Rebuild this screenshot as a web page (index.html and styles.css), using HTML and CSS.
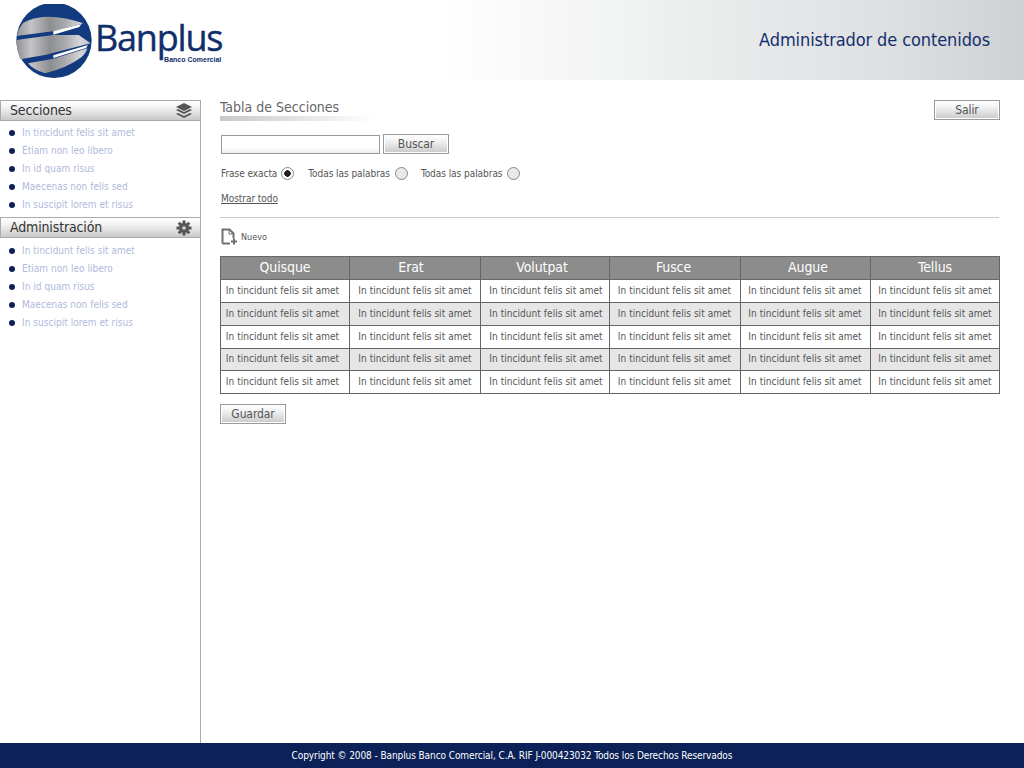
FILE: index.html
```html
<!DOCTYPE html>
<html lang="es">
<head>
<meta charset="utf-8">
<title>Banplus - Administrador de contenidos</title>
<link rel="stylesheet" href="styles.css">
</head>
<body>
<header class="top">
  <div class="logo">
    <svg class="globe" width="80" height="76" viewBox="45 12 240 228">
      <defs>
        <linearGradient id="band" gradientUnits="userSpaceOnUse" x1="48" y1="0" x2="275" y2="0">
          <stop offset="0" stop-color="#8f9093"/>
          <stop offset=".2" stop-color="#c4c4c6"/>
          <stop offset=".45" stop-color="#8d8e91"/>
          <stop offset=".65" stop-color="#a9aaad"/>
          <stop offset=".85" stop-color="#d6d6d8"/>
          <stop offset="1" stop-color="#bcbdc0"/>
        </linearGradient>
      </defs>
      <circle cx="162" cy="121" r="113" fill="#123a7e"/>
      <path d="M70 68Q140 32 250 70L170 92 50 108Q55 85 70 68Z" fill="url(#band)"/>
      <path d="M160 94L244 72 238 81 160 104Z" fill="#fff"/>
      <path d="M48 120L160 105 236 105 272 130 135 165 60 178Q50 150 48 120Z" fill="url(#band)"/>
      <path d="M160 166L264 135 258 144 160 174Z" fill="#fff"/>
      <path d="M84 190L160 176 262 145Q258 160 244 172 200 205 135 220 100 210 84 190Z" fill="url(#band)"/>
    </svg>
    <div class="brand">
      <span class="brand-name">Banplus</span>
      <span class="brand-sub">Banco Comercial</span>
    </div>
  </div>
  <h1 class="app-title">Administrador de contenidos</h1>
</header>

<div class="main">
  <aside class="side">
    <div class="side-head">
      <span>Secciones</span>
      <svg width="18" height="18" viewBox="0 0 18 18"><path d="M9 1l8 4-8 4-8-4z" fill="#555"/><path d="M1 8l2-1 6 3 6-3 2 1-8 4z" fill="#555"/><path d="M1 12l2-1 6 3 6-3 2 1-8 4z" fill="#555"/></svg>
    </div>
    <ul class="side-list">
      <li>In tincidunt felis sit amet</li>
      <li>Etiam non leo libero</li>
      <li>In id quam risus</li>
      <li>Maecenas non felis sed</li>
      <li>In suscipit lorem et risus</li>
    </ul>
    <div class="side-head">
      <span>Administración</span>
      <svg width="18" height="18" viewBox="0 0 18 18"><g fill="#555"><circle cx="9" cy="9" r="5"/><rect x="7.500" y="1.500" width="3" height="15"/><rect x="7.500" y="1.500" width="3" height="15" transform="rotate(45 9 9)"/><rect x="7.500" y="1.500" width="3" height="15" transform="rotate(90 9 9)"/><rect x="7.500" y="1.500" width="3" height="15" transform="rotate(135 9 9)"/></g><circle cx="9" cy="9" r="1.800" fill="#d8d8d8"/></svg>
    </div>
    <ul class="side-list">
      <li>In tincidunt felis sit amet</li>
      <li>Etiam non leo libero</li>
      <li>In id quam risus</li>
      <li>Maecenas non felis sed</li>
      <li>In suscipit lorem et risus</li>
    </ul>
  </aside>

  <main class="content">
    <div class="title-row">
      <h2 class="page-title">Tabla de Secciones</h2>
      <button class="btn" type="button">Salir</button>
    </div>
    <div class="search">
      <input class="search-input" type="text" aria-label="Buscar">
      <button class="btn" type="button">Buscar</button>
    </div>
    <div class="radios">
      <span class="radio-item">Frase exacta <i class="radio on"></i></span>
      <span class="radio-item">Todas las palabras <i class="radio"></i></span>
      <span class="radio-item">Todas las palabras <i class="radio"></i></span>
    </div>
    <a class="show-all" href="#">Mostrar todo</a>
    <div class="rule"></div>
    <div class="new">
      <svg width="17" height="17" viewBox="0 0 17 17"><path d="M1.500 15.500V1.500h7l4 4v5M1.500 15.500h7.500" fill="none" stroke="#707070" stroke-width="2"/><path d="M8 1.500v4.500h4.500" fill="none" stroke="#707070" stroke-width="1"/><path d="M10 13.500h6M13 10.500v6" stroke="#707070" stroke-width="2"/></svg>
      <span>Nuevo</span>
    </div>
    <table class="grid">
      <thead>
        <tr><th>Quisque</th><th>Erat</th><th>Volutpat</th><th>Fusce</th><th>Augue</th><th>Tellus</th></tr>
      </thead>
      <tbody>
        <tr><td>In tincidunt felis sit amet</td><td>In tincidunt felis sit amet</td><td>In tincidunt felis sit amet</td><td>In tincidunt felis sit amet</td><td>In tincidunt felis sit amet</td><td>In tincidunt felis sit amet</td></tr>
        <tr><td>In tincidunt felis sit amet</td><td>In tincidunt felis sit amet</td><td>In tincidunt felis sit amet</td><td>In tincidunt felis sit amet</td><td>In tincidunt felis sit amet</td><td>In tincidunt felis sit amet</td></tr>
        <tr><td>In tincidunt felis sit amet</td><td>In tincidunt felis sit amet</td><td>In tincidunt felis sit amet</td><td>In tincidunt felis sit amet</td><td>In tincidunt felis sit amet</td><td>In tincidunt felis sit amet</td></tr>
        <tr><td>In tincidunt felis sit amet</td><td>In tincidunt felis sit amet</td><td>In tincidunt felis sit amet</td><td>In tincidunt felis sit amet</td><td>In tincidunt felis sit amet</td><td>In tincidunt felis sit amet</td></tr>
        <tr><td>In tincidunt felis sit amet</td><td>In tincidunt felis sit amet</td><td>In tincidunt felis sit amet</td><td>In tincidunt felis sit amet</td><td>In tincidunt felis sit amet</td><td>In tincidunt felis sit amet</td></tr>
      </tbody>
    </table>
    <button class="btn save" type="button">Guardar</button>
  </main>
</div>

<footer class="foot">Copyright © 2008 - Banplus Banco Comercial, C.A. RIF J-000423032 Todos los Derechos Reservados</footer>
</body>
</html>
```
FILE: styles.css
```css
* { box-sizing: border-box; }
html, body { height: 100%; }
body {
  margin: 0;
  display: flex;
  flex-direction: column;
  height: 768px;
  overflow: hidden;
  background: #fff;
  color: #555;
  font-family: "DejaVu Sans Condensed", "DejaVu Sans", sans-serif;
  font-size: 10px;
}

/* header */
.top {
  flex: 0 0 80px;
  display: flex;
  justify-content: space-between;
  background: linear-gradient(90deg, #fff 0, #fff 440px, #f3f4f4 600px, #e7e8e9 760px, #dfe0e2 880px, #cfd0d2 100%);
}
.logo { display: flex; padding: 4px 0 0 15px; }
.globe { display: block; }
.brand { display: flex; flex-direction: column; align-items: flex-end; }
.brand-name {
  margin-top: 13px;
  font-family: "Open Sans", sans-serif;
  font-size: 36px;
  line-height: 42px;
  letter-spacing: -1.2px;
  -webkit-text-stroke: .4px #0f2e6a;
  color: #0f2e6a;
}
.brand-sub {
  margin-top: -3px;
  padding-right: 1px;
  font-family: "Liberation Sans", sans-serif;
  font-size: 7px;
  font-weight: bold;
  line-height: 8px;
  color: #0f2e6a;
}
.app-title {
  margin: 29px 34px 0 0;
  font-size: 18px;
  font-weight: normal;
  line-height: 21px;
  letter-spacing: -.1px;
  color: #12306e;
}

/* layout */
.main { flex: 1; display: flex; padding-top: 20px; min-height: 0; }
.side {
  flex: 0 0 201px;
  border-right: 1px solid #aaa;
}
.side-head {
  display: flex;
  align-items: center;
  justify-content: space-between;
  height: 21px;
  padding: 0 7px 2px 9px;
  border: 1px solid #aaa;
  border-right: 0;
  background: linear-gradient(#fff, #f2f2f2 35%, #c9c9c9);
  font-size: 14px;
  letter-spacing: -.15px;
  color: #333;
}
.side-head svg { margin-top: 2px; }
.side-list { list-style: none; margin: 0; padding: 3px 0; }
.side-list:last-child { padding-top: 4px; }
.side-list li {
  position: relative;
  height: 18px;
  padding-left: 22px;
  line-height: 18px;
  color: #b0b9dc;
  font-size: 10px;
  letter-spacing: .03px;
}
.side-list li::before {
  content: "";
  position: absolute;
  left: 9px;
  top: 6px;
  width: 6px;
  height: 6px;
  border-radius: 50%;
  background: #0f2158;
}

/* content */
.content { flex: 1; padding: 0 24px 0 19px; min-width: 0; }
.title-row { display: flex; justify-content: space-between; height: 34px; }
.page-title {
  width: 156px;
  height: 21px;
  margin: 0;
  padding-bottom: 5px;
  background: linear-gradient(90deg, #c8c8c8, #fff) left bottom / 100% 5px no-repeat;
  font-size: 14px;
  font-weight: normal;
  line-height: 14px;
  color: #666;
}
.btn {
  display: block;
  width: 66px;
  height: 20px;
  padding: 0;
  border: 1px solid #999;
  outline: 1px solid #fff;
  outline-offset: -2px;
  background: linear-gradient(#fff, #f2f2f2 35%, #c9c9c9);
  font: 12px/18px "DejaVu Sans Condensed", "DejaVu Sans", sans-serif;
  letter-spacing: -.1px;
  color: #555;
}
.search { display: flex; align-items: flex-end; gap: 3px; padding-left: 1px; }
.search-input {
  width: 159px;
  height: 19px;
  border: 1px solid #999;
  background: linear-gradient(#fff 70%, #ececec);
}
.radios { display: flex; gap: 13px; margin-top: 12px; padding-left: 1px; height: 15px; align-items: center; }
.radio-item { display: flex; align-items: center; gap: 5px; font-size: 10px; letter-spacing: -.05px; color: #555; }
.radio-item:first-child { gap: 4px; margin-right: 1px; }
.radio {
  display: block;
  width: 13px;
  height: 13px;
  border: 1px solid #888;
  border-radius: 50%;
  background: #e8e8e8;
}
.radio.on { background: radial-gradient(circle, #222 0, #222 3px, #fff 3.5px); }
.show-all {
  display: inline-block;
  margin: 12px 0 0 1px;
  font-size: 10px;
  line-height: 12px;
  letter-spacing: -.05px;
  color: #555;
}
.rule { height: 1px; margin: 12px 1px 0 0; background: #ccc; }
.new { display: flex; align-items: center; gap: 3px; height: 17px; margin-top: 10px; padding-left: 1px; font-size: 9px; color: #555; }
.grid {
  width: 779px;
  margin-top: 11px;
  border-collapse: collapse;
  table-layout: fixed;
}
.grid th {
  height: 23px;
  padding: 0 0 2px;
  border: 1px solid #666;
  background: #8c8c8c;
  font-size: 14px;
  font-weight: normal;
  letter-spacing: -.1px;
  color: #fff;
}
.grid th:nth-child(1) { width: 129px; }
.grid th:nth-child(2) { width: 131px; padding-right: 8px; }
.grid th:nth-child(3) { width: 129px; padding-right: 6px; }
.grid th:nth-child(4) { width: 131px; padding-right: 3px; }
.grid th:nth-child(5) { width: 130px; padding-left: 5px; }
.grid th:nth-child(6) { width: 129px; }
.grid td {
  height: 23px;
  padding: 0 0 2px;
  border: 1px solid #666;
  text-align: center;
  font-size: 10px;
  letter-spacing: .05px;
  color: #555;
  white-space: nowrap;
}
.grid td:nth-child(1) { padding-right: 5px; }
.grid td:nth-child(3) { padding-left: 2px; }
.grid td:nth-child(4), .grid td:nth-child(5) { padding-right: 1px; }
.grid tbody tr:nth-child(even) td { background: #e6e6e6; }
.grid tbody tr:nth-child(4) td { height: 22px; }
.save { margin-top: 10px; }

/* footer */
.foot {
  flex: 0 0 25px;
  background: #0c2158;
  color: #fff;
  text-align: center;
  font-size: 10px;
  letter-spacing: -.09px;
  line-height: 25px;
}
```
